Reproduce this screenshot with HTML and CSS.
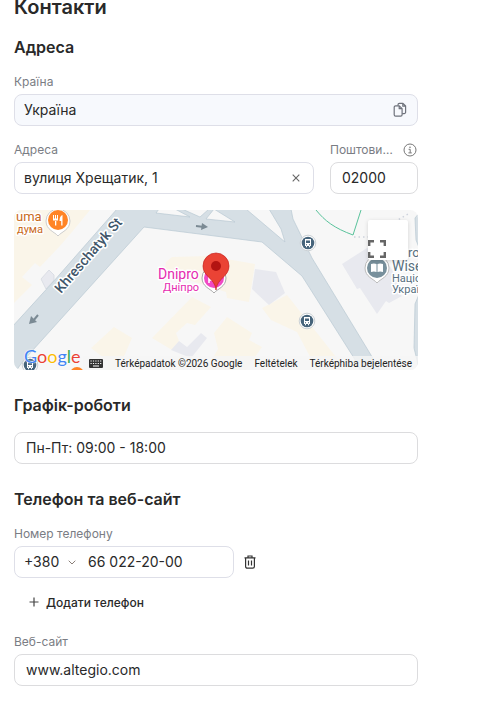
FILE: index.html
```
<!DOCTYPE html>
<html lang="uk">

<head>
    <meta charset="UTF-8">
    <meta name="viewport" content="width=device-width, initial-scale=1.0">
    <title>Контакти</title>
    <link rel="stylesheet" href="styles.css">
</head>

<body>
    <main class="contacts">
        <h1>Контакти</h1>

        <section>
            <h2>Адреса</h2>
            <div class="field">
                <label for="country">Країна</label>
                <div class="control readonly">
                    <input type="text" id="country" value="Україна" readonly>
                    <button type="button" class="icon-button" aria-label="Копіювати">
                        <svg width="14" height="16" viewBox="0 0 14 16" fill="none" stroke="#6f737c" stroke-width="1.2" stroke-linejoin="round">
                            <path d="M5 3.400V2.800a1.400 1.400 0 0 1 1.400-1.400h3.600l2.600 2.600v6.200a1.400 1.400 0 0 1-1.400 1.400H9.200M9.800 1.600v2.600h2.600" />
                            <path d="M1.200 5.200a1.400 1.400 0 0 1 1.400-1.400h3.700l2.800 2.800v6.200a1.400 1.400 0 0 1-1.400 1.400H2.600a1.400 1.400 0 0 1-1.400-1.400zM6.200 4v2.700h2.700" />
                        </svg>
                    </button>
                </div>
            </div>

            <div class="row">
                <div class="field grow">
                    <label for="address">Адреса</label>
                    <div class="control">
                        <input type="text" id="address" value="вулиця Хрещатик, 1">
                        <button type="button" class="icon-button clear" aria-label="Очистити">
                            <svg width="8" height="8" viewBox="0 0 8 8" stroke="#666" stroke-width="1.1">
                                <path d="M.7.7l6.600 6.600M7.300.7L.7 7.300" />
                            </svg>
                        </button>
                    </div>
                </div>
                <div class="field postcode">
                    <div class="label-row">
                        <label for="postcode">Поштовий індекс</label>
                        <svg width="14" height="14" viewBox="0 0 14 14" fill="none" stroke="#777">
                            <circle cx="7" cy="7" r="6" />
                            <path d="M5.600 6.300h1.600v3.500M5.400 9.900h3.400" />
                            <circle cx="7" cy="4.200" r=".8" fill="#777" stroke="none" />
                        </svg>
                    </div>
                    <input type="text" class="box" id="postcode" value="02000">
                </div>
            </div>

            <div class="map">
                <svg class="map-canvas" viewBox="0 0 404 160" preserveAspectRatio="xMidYMid slice">
                    <rect width="404" height="160" fill="#f7f7f7" />

                    <!-- buildings -->
                    <g fill="#faf5e9">
                        <path d="M0 0h76L58 22 45 37 26 57l-5-4-13 14 10 8L0 93z" />
                        <path d="M77 138l23-21 18 11-14 32H92l3-8z" />
                        <path d="M152 52l6-5 37-1 46 8-6 38-22-4-1-6-62-20z" />
                        <path d="M138 128l40-41 19 10-16 18-8-2-11 10 3 8-7 9z" />
                        <path d="M200 123l13-16 25 16-3 7 13 7-16 23h-40l12-21z" />
                        <path d="M248 98l25-13 49 62 5 13h-24l-20-38-26-12z" />
                    </g>
                    <g fill="#e8e9ef">
                        <path d="M241 59l21 3 9 21-16 12-17-16z" />
                        <path d="M157 140l8-9 8 6 14-14 6 5-16 20z" />
                        <path d="M328 54l25-16 16 5 17 32-4 6 6 5-13 7-3-2-9 13-17-26-3 1z" />
                        <path d="M27 69l8-9 5 5v5l-8 9z" stroke="#d5d9e1" stroke-width=".8" />
                    </g>

                    <!-- roads -->
                    <g fill="#d6dfe5" stroke="#b9c8d3" stroke-width=".7">
                        <path d="M-2 117L39 72 103 -1H277L279 9 298 48 363 155 366 161H347L340 148 288 66 248 32 130 17 9 151 2 161H-2z" />
                        <path d="M406 2l-5 6 1 22 4 10zM406 82l-5 12-1 44 6 24z" />
                    </g>
                    <g fill="#f7f7f7" stroke="#b9c8d3" stroke-width=".7">
                        <path d="M145 -1l-3 4 34 4-15-8zM168 -1l18 8 9-8zM192 9l8-10 21 13z" />
                        <path d="M232 -1L271 32 267 19 255 -1z" />
                    </g>
                    <g fill="none">
                        <path d="M302 0c9 11 18 18 37 25l8-25" stroke="#59c29b" />
                        <path d="M340 27h14l40-23" stroke="#cdd2dc" stroke-width="1.5" stroke-dasharray="1.5 3" />
                    </g>
                    <g fill="none" stroke="#7b8a94" stroke-width="2">
                        <path d="M24 105l-5 6M182 16l8 1" />
                    </g>
                    <g fill="#7b8a94">
                        <path d="M15 114l2-8 6 6zM194 17l-6-4-1 7z" />
                    </g>

                    <!-- transit stops -->
                    <g id="stop" transform="translate(294 33)">
                        <circle r="7.800" fill="#fff" stroke="#cbd1d5" />
                        <circle r="6.300" fill="#46647b" />
                        <path d="M-3-4h6v7h-1v1.200h-1V3h-2v1.200h-1V3h-1z" fill="#fff" />
                        <path d="M-2-2.500h4V0h-4zM-2 1.200h1v1h-1zM1 1.200h1v1H1z" fill="#46647b" />
                    </g>
                    <use href="#stop" x="-1" y="78" />
                    <use href="#stop" x="-278" y="122" />

                    <!-- places -->
                    <g class="place orange">
                        <text x="2" y="11" font-size="13">uma</text>
                        <text x="3" y="23" font-size="11">дума</text>
                    </g>
                    <path d="M44 26c-3-4-12-6-12-15a12 12 0 0 1 24 0c0 9-9 11-12 15z" fill="#fff" stroke="#ccc" />
                    <circle cx="44" cy="10" r="10" fill="#ff8426" />
                    <path d="M39 5v5.500h5V5h-1v3.500h-1V5h-1v3.500h-1V5zM41 10h1.300v5.500H41zM48.500 5v10.500h-1.300V11h-1.700q0-5 3-6z" fill="#fff" />
                    <circle cx="63" cy="164" r="7" fill="#ff8426" />

                    <g class="place street">
                        <text transform="translate(47 84) rotate(-49)" font-size="14">Khreschatyk St</text>
                    </g>

                    <g class="place pink">
                        <text x="144" y="69" font-size="14">Dnipro</text>
                        <text x="149" y="81" font-size="11">Дніпро</text>
                    </g>
                    <path d="M200 83c-3-4-12-6-12-15a12 12 0 0 1 24 0c0 9-9 11-12 15z" fill="#fff" stroke="#aaa" />
                    <circle cx="200" cy="68" r="10" fill="#f04ac4" />
                    <path d="M195 66v7M195 70h6" stroke="#fff" stroke-width="1.600" />
                    <path d="M202 80c-1-12-13-13-13-24a13 13 0 0 1 26 0c0 11-12 12-13 24z" fill="#ea4335" stroke="#c5221f" stroke-width=".7" />
                    <circle cx="202" cy="56" r="5" fill="#b31412" />

                    <g class="place slate">
                        <text x="394" y="47" font-size="13">ro</text>
                        <text x="378" y="61" font-size="14">Wise</text>
                        <text x="378" y="72" font-size="11">Націо</text>
                        <text x="378" y="83" font-size="11">Украї</text>
                    </g>
                    <path d="M363 73c-3-4-12-6-12-15a12 12 0 0 1 24 0c0 9-9 11-12 15z" fill="#fff" stroke="#bbb" />
                    <circle cx="363" cy="58" r="10" fill="#78909c" />
                    <path d="M357 54q3-1 5.500 0v8q-2.500-1-5.500 0zM363.500 54q2.500-1 5.500 0v8q-3-1-5.500 0z" fill="#fff" />
                </svg>
                <button type="button" class="fullscreen" aria-label="Fullscreen">
                    <svg width="18" height="18" viewBox="0 0 18 18" fill="none" stroke="#666" stroke-width="2.400">
                        <path d="M1.200 6V1.200H6M12 1.200h4.800V6M16.800 12v4.800H12M6 16.800H1.200V12" />
                    </svg>
                </button>
                <a href="#" class="google"><span class="blue">G</span><span class="red">o</span><span class="yellow">o</span><span class="blue">g</span><span class="green">l</span><span class="red">e</span></a>
                <div class="map-footer">
                    <button type="button" class="keyboard" aria-label="Keyboard shortcuts">
                        <svg width="14" height="9" viewBox="0 0 14 9">
                            <rect width="14" height="9" rx="1" fill="#333" />
                            <path d="M1.500 2h11M1.500 4.500h11" stroke="#fff" stroke-width="1.200" stroke-dasharray="1.200 1.200" />
                            <path d="M4 7h6" stroke="#fff" stroke-width="1.200" />
                        </svg>
                    </button>
                    <span>Térképadatok ©2026 Google</span>
                    <a href="#">Feltételek</a>
                    <a href="#">Térképhiba bejelentése</a>
                </div>
            </div>
        </section>

        <section>
            <h2 id="schedule-title">Графік-роботи</h2>
            <input type="text" class="box" aria-labelledby="schedule-title" value="Пн-Пт: 09:00 - 18:00">
        </section>

        <section>
            <h2>Телефон та веб-сайт</h2>
            <div class="field">
                <label for="phone">Номер телефону</label>
                <div class="phone-row">
                    <div class="control phone">
                        <select aria-label="Код країни">
                            <option>+380</option>
                        </select>
                        <svg class="chevron" width="8" height="5" viewBox="0 0 8 5" fill="none" stroke="#8a7f78">
                            <path d="M.7.7L4 4 7.300.7" />
                        </svg>
                        <input type="tel" id="phone" value="66 022-20-00">
                    </div>
                    <button type="button" class="icon-button" aria-label="Видалити">
                        <svg width="12" height="14" viewBox="0 0 12 14" fill="none" stroke="#333" stroke-width="1.200">
                            <path d="M.5 2.900h11M4 2.700V1h4v1.700M1.600 3v8.500a1.700 1.700 0 0 0 1.700 1.700h5.400a1.700 1.700 0 0 0 1.700-1.700V3M4.500 5.500v5M7.500 5.500v5" />
                        </svg>
                    </button>
                </div>
            </div>
            <button type="button" class="add-button">
                <svg width="10" height="10" viewBox="0 0 10 10" stroke="#444" stroke-width="1.200">
                    <path d="M5 .5v9M.5 5h9" />
                </svg>
                Додати телефон
            </button>
            <div class="field">
                <label for="website">Веб-сайт</label>
                <input type="text" class="box" id="website" value="www.altegio.com">
            </div>
        </section>
    </main>
</body>

</html>
```
FILE: styles.css
```
* {
    box-sizing: border-box;
}

body {
    margin: 0;
    background-color: #fff;
    color: #292929;
    font-family: Inter, sans-serif;
    font-size: 14px;
}

.contacts {
    max-width: 432px;
    padding: 0 14px 20px;
}

h1 {
    margin: 0 0 21px;
    font-size: 20px;
    font-weight: 600;
    line-height: 14px;
}

h2 {
    margin: 0 0 15px;
    font-size: 16px;
    font-weight: 600;
    line-height: 24px;
}

section {
    margin-bottom: 23px;
}

label {
    display: block;
    color: #7a7d84;
    font-size: 12px;
    line-height: 16px;
}

input,
select,
button {
    margin: 0;
    padding: 0;
    border: none;
    background: none;
    color: inherit;
    font: inherit;
}

input,
select {
    min-width: 0;
    padding-bottom: 2px;
    outline: none;
}

input {
    width: 100%;
}

button {
    cursor: pointer;
}

svg {
    display: block;
    flex: none;
}

.field {
    display: flex;
    flex-direction: column;
    gap: 4px;
}

.row {
    display: flex;
    gap: 16px;
    margin: 16px 0;
}

.grow {
    flex: 1;
}

.postcode {
    width: 88px;
}

.label-row {
    display: flex;
    align-items: center;
    justify-content: space-between;
    gap: 8px;
    padding-right: 1px;
}

.label-row label {
    overflow: hidden;
    text-overflow: ellipsis;
    white-space: nowrap;
}

.control,
.box {
    height: 32px;
    border: 1px solid #dedfe8;
    border-radius: 8px;
}

.box {
    padding: 0 11px 2px;
    border-color: #dcdcde;
}

.control {
    display: flex;
    align-items: center;
    padding: 0 10px 0 9px;
}

.readonly {
    background-color: #f7f9fd;
}

.icon-button {
    flex: none;
}

.clear {
    padding: 0 3px;
}

.map {
    position: relative;
    height: 160px;
    overflow: hidden;
    border-radius: 8px;
    font-family: Roboto, sans-serif;
}

.map-canvas {
    width: 100%;
    height: 100%;
}

.place {
    stroke: #fff;
    stroke-width: 3px;
    stroke-linejoin: round;
    paint-order: stroke;
}

.orange {
    fill: #c96a1b;
}

.pink {
    fill: #e52bb0;
}

.slate {
    fill: #587080;
}

.street {
    fill: #41566a;
    font-weight: 500;
}

.fullscreen {
    position: absolute;
    top: 10px;
    right: 10px;
    display: flex;
    align-items: flex-end;
    width: 40px;
    height: 40px;
    padding-bottom: 2px;
    border-radius: 2px;
    background-color: #fff;
    box-shadow: 0 1px 4px rgba(0, 0, 0, 0.15);
}

.google {
    position: absolute;
    bottom: 2px;
    left: 10px;
    font-family: Lato, sans-serif;
    font-size: 18px;
    line-height: 24px;
    text-decoration: none;
    text-shadow: 0 0 1px #fff, 0 0 2px #fff;
}

.blue {
    color: #4285f4;
}

.red {
    color: #ea4335;
}

.yellow {
    color: #fbbc04;
}

.green {
    color: #34a853;
}

.map-footer {
    position: absolute;
    right: 0;
    bottom: 0;
    display: flex;
    align-items: center;
    gap: 12px;
    height: 14px;
    padding: 0 6px;
    background-color: rgba(245, 245, 245, 0.8);
    color: #222;
    font-size: 10px;
    white-space: nowrap;
}

.map-footer a {
    color: inherit;
    text-decoration: none;
}

.phone-row {
    display: flex;
    align-items: center;
    gap: 10px;
}

.phone {
    width: 220px;
}

.phone select {
    flex: none;
    width: 52px;
    margin-right: -8px;
    appearance: none;
}

.chevron {
    margin-right: 12px;
    pointer-events: none;
}

.add-button {
    display: flex;
    align-items: center;
    gap: 7px;
    height: 32px;
    margin: 8px 0 16px;
    padding: 0 15px;
    font-size: 12px;
    font-weight: 500;
}
```
